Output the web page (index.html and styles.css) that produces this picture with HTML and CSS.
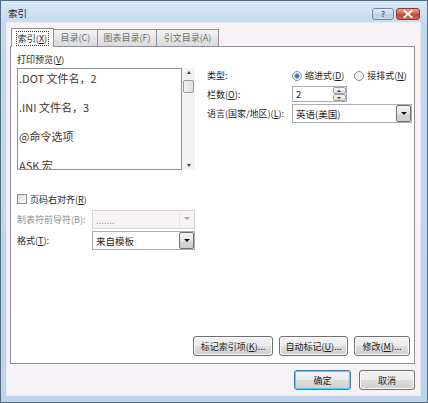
FILE: index.html
```html
<!DOCTYPE html>
<html lang="zh-CN">
<head>
  <meta charset="UTF-8" />
  <title>索引</title>
  <link rel="stylesheet" href="styles.css">
</head>
<body>
  <div class="window">
    <!-- Thanh tiêu đề -->
    <div class="titlebar">
      <span class="title">索引</span>
      <div class="caption-btns">
        <span class="cap help">?</span>
        <span class="cap close">
          <svg width="10" height="8" viewBox="0 0 10 8"><path d="M1.5 1 L8.5 7 M8.5 1 L1.5 7" stroke="#fff" stroke-width="2" stroke-linecap="square"/></svg>
        </span>
      </div>
    </div>

    <div class="client">
      <!-- Các tab -->
      <div class="tabs">
        <div class="tab active"><span class="focus">索引(<u>X</u>)</span></div>
        <div class="tab t2">目录(C)</div>
        <div class="tab t3">图表目录(F)</div>
        <div class="tab t4">引文目录(A)</div>
      </div>

      <div class="panel">
        <div class="cols">
          <div class="left">
            <div class="lbl">打印预览(<u>V</u>)</div>
            <div class="preview">
              <div class="preview-text">
                <div class="entry">.DOT 文件名，2</div>
                <div class="entry">.INI 文件名，3</div>
                <div class="entry">@命令选项</div>
                <div class="entry">ASK 宏</div>
              </div>
              <div class="vscroll">
                <span class="arr up"></span>
                <span class="thumb"></span>
                <span class="arr down"></span>
              </div>
            </div>

            <div class="check-row">
              <span class="checkbox"></span>
              <span>页码右对齐(<u>R</u>)</span>
            </div>
            <div class="form-row">
              <span class="flabel dim">制表符前导符(B):</span>
              <div class="combo disabled"><span class="ctext">.......</span><span class="drop"></span></div>
            </div>
            <div class="form-row fmt">
              <span class="flabel">格式(<u>T</u>):</span>
              <div class="combo"><span class="ctext">来自模板</span><span class="drop"></span></div>
            </div>
          </div>

          <div class="right">
            <div class="rrow r1">
              <span class="rlabel">类型:</span>
              <span class="radio on"></span><span class="rtext">缩进式(<u>D</u>)</span>
              <span class="radio second"></span><span class="rtext">接排式(<u>N</u>)</span>
            </div>
            <div class="rrow r2">
              <span class="rlabel">栏数(<u>O</u>):</span>
              <div class="spin">
                <span class="ctext">2</span>
                <span class="spin-btns"><span class="sb up"></span><span class="sb down"></span></span>
              </div>
            </div>
            <div class="rrow r3">
              <span class="rlabel">语言(国家/地区)(<u>L</u>):</span>
              <div class="combo lang"><span class="ctext">英语(美国)</span><span class="drop"></span></div>
            </div>
          </div>
        </div>

        <div class="actions">
          <button class="btn b1">标记索引项(<u>K</u>)...</button>
          <button class="btn b2">自动标记(<u>U</u>)...</button>
          <button class="btn b3">修改(<u>M</u>)...</button>
        </div>
      </div>

      <div class="footer">
        <button class="btn ok">确定</button>
        <button class="btn cancel">取消</button>
      </div>
    </div>
  </div>
</body>
</html>
```

FILE: styles.css
```css
* {
  box-sizing: border-box;
}

body {
  margin: 0;
  font-family: "Noto Sans CJK SC", "Noto Sans", sans-serif;
  font-size: 9px;
  color: #1e1e1e;
}

u {
  text-decoration: underline;
  text-underline-offset: 1px;
}

/* Khung cửa sổ */
.window {
  width: 428px;
  height: 403px;
  display: flex;
  flex-direction: column;
  border: 1px solid #566a80;
  background: linear-gradient(#d9e7f6, #c4d9f0 24px, #bcd3ee);
}

.titlebar {
  height: 21px;
  display: flex;
  align-items: flex-start;
  padding: 6px 7px 0 7px;
}

.title {
  font-size: 9.5px;
  line-height: 13px;
  color: #1b1b1b;
}

.caption-btns {
  margin-left: auto;
  display: flex;
  gap: 2px;
  margin-top: 1px;
}

.cap {
  height: 12px;
  border-radius: 3px;
  display: flex;
  align-items: center;
  justify-content: center;
}

.help {
  width: 22px;
  border: 1px solid #7189a6;
  background: linear-gradient(#e6eef8, #cbdaeb 50%, #b9cce3 51%, #c8d8ea);
  color: #4f6580;
  font-weight: bold;
  font-size: 8px;
  line-height: 10px;
}

.close {
  width: 24px;
  border: 1px solid #8d3a32;
  background: linear-gradient(#e8a092, #d0604f 50%, #c0402f 51%, #cf6a54);
}

/* Vùng nội dung */
.client {
  flex: 1;
  margin: 0 6px 6px 5px;
  background: #f6f2f6;
  border: 1px solid #e6edf5;
  padding: 4px 5px 0 3px;
  display: flex;
  flex-direction: column;
}

.tabs {
  height: 19px;
  display: flex;
  align-items: flex-end;
}

.tab {
  height: 17px;
  border: 1px solid #8e9096;
  border-bottom: none;
  border-left: none;
  background: linear-gradient(#f4f4f4, #e6e6e6 50%, #dadada);
  color: #6e6e6e;
  text-align: center;
  line-height: 16px;
}

.tab.active {
  height: 19px;
  width: 43px;
  margin-left: 1px;
  margin-bottom: -1px;
  border-left: 1px solid #8e9096;
  background: #fff;
  color: #1e1e1e;
  position: relative;
  z-index: 1;
  padding-top: 2px;
}

.focus {
  outline: 1px dotted #444;
  outline-offset: 0;
  padding: 0 1px;
}

.t2 { width: 44px; }
.t3 { width: 59px; }
.t4 { width: 62px; }

.panel {
  height: 318px;
  background: #fff;
  border: 1px solid #8e9096;
  padding: 6px 2px 7px 6px;
  display: flex;
  flex-direction: column;
}

.cols {
  display: flex;
}

.left {
  width: 178px;
}

.lbl {
  height: 15px;
  line-height: 14px;
}

/* Khung xem trước */
.preview {
  height: 102px;
  display: flex;
}

.preview-text {
  flex: 1;
  border: 1px solid #8f9399;
  padding: 2px 0 0 1px;
  overflow: hidden;
  color: #4a3328;
  font-size: 11px;
}

.entry {
  line-height: 14px;
  margin-bottom: 15px;
  white-space: nowrap;
}

.vscroll {
  width: 13px;
  background: #f3f1f3;
  display: flex;
  flex-direction: column;
  align-items: center;
  padding: 3px 0;
}

.arr {
  width: 0;
  height: 0;
  border-left: 2px solid transparent;
  border-right: 2px solid transparent;
}

.arr.up {
  border-bottom: 3px solid #444;
}

.arr.down {
  border-top: 3px solid #444;
  margin-top: auto;
}

.thumb {
  width: 11px;
  height: 13px;
  margin-top: 6px;
  border: 1px solid #9a9a9a;
  border-radius: 2px;
  background: linear-gradient(90deg, #f2f2f2, #dedede);
}

.check-row {
  display: flex;
  align-items: center;
  gap: 3px;
  height: 14px;
  margin-top: 22px;
}

.checkbox {
  width: 10px;
  height: 10px;
  border: 1px solid #8f8f8f;
  background: linear-gradient(135deg, #dcdcdc, #fbfbfb);
}

.form-row {
  display: flex;
  align-items: center;
  margin-top: 4px;
}

.form-row.fmt {
  margin-top: 2px;
}

.flabel {
  width: 75px;
}

.dim {
  color: #8e8e8e;
}

/* Hộp chọn */
.combo {
  width: 103px;
  height: 19px;
  border: 1px solid #abadb3;
  background: #fff;
  display: flex;
  align-items: center;
}

.ctext {
  flex: 1;
  padding-left: 3px;
  font-size: 9.5px;
}

.drop {
  width: 15px;
  height: 100%;
  border: 1px solid #707070;
  border-radius: 2px;
  background: linear-gradient(#f2f2f2, #e6e6e6 50%, #d6d6d6 51%, #cfcfcf);
  position: relative;
}

.drop::after {
  content: "";
  position: absolute;
  left: 4px;
  top: 6px;
  border-left: 3px solid transparent;
  border-right: 3px solid transparent;
  border-top: 3px solid #111;
}

.combo.disabled {
  border-color: #d3d3d3;
  background: #f6f2f6;
}

.combo.disabled .ctext {
  color: #8a8a8a;
}

.combo.disabled .drop {
  border: none;
  border-left: 1px solid #e3e3e3;
  background: #f6f2f6;
}

.combo.disabled .drop::after {
  border-top-color: #a3a3a3;
}

.right {
  margin-left: 12px;
  padding-top: 14px;
  flex: 1;
}

.rrow {
  display: flex;
  align-items: center;
}

.r1 {
  height: 17px;
  margin-bottom: 2px;
}

.r2 {
  height: 16px;
  margin-bottom: 2px;
}

.r3 {
  height: 19px;
}

.rlabel {
  width: 85px;
}

.radio {
  width: 10px;
  height: 10px;
  border-radius: 50%;
  border: 1px solid #8e8f8f;
  background: radial-gradient(#e8e8e8, #fcfcfc);
  margin-right: 3px;
}

.radio.on {
  background: radial-gradient(circle, #2a62b0 0, #4f8fd8 2px, #e6e6e6 3px, #fcfcfc 4px);
}

.radio.second {
  margin-left: 10px;
}

.spin {
  width: 55px;
  height: 16px;
  border: 1px solid #abadb3;
  display: flex;
  align-items: center;
}

.spin-btns {
  width: 13px;
  height: 100%;
  display: flex;
  flex-direction: column;
}

.sb {
  flex: 1;
  border: 1px solid #a0a0a0;
  border-radius: 2px;
  background: linear-gradient(#f5f5f5, #dedede);
  position: relative;
}

.sb::after {
  content: "";
  position: absolute;
  left: 3px;
  top: 2px;
  border-left: 2px solid transparent;
  border-right: 2px solid transparent;
}

.sb.up::after {
  border-bottom: 2px solid #333;
}

.sb.down::after {
  border-top: 2px solid #333;
}

.combo.lang {
  width: 120px;
}

/* Nút bấm */
.btn {
  height: 20px;
  font-family: inherit;
  font-size: 9px;
  color: #1e1e1e;
  border: 1px solid #707070;
  border-radius: 3px;
  background: linear-gradient(#f3f3f3, #ebebeb 50%, #dddddd 51%, #cfcfcf);
  box-shadow: inset 0 0 0 1px #fcfcfc;
  padding: 0;
}

.actions {
  margin-top: auto;
  display: flex;
  justify-content: flex-end;
  gap: 6px;
  padding-right: 2px;
}

.b1 { width: 80px; }
.b2 { width: 69px; }
.b3 { width: 56px; }

.footer {
  display: flex;
  justify-content: flex-end;
  gap: 8px;
  padding-top: 6px;
}

.ok {
  width: 57px;
  border-color: #3c7fb1;
  box-shadow: inset 0 0 0 1px #48d5fd;
}

.cancel {
  width: 56px;
}
```
